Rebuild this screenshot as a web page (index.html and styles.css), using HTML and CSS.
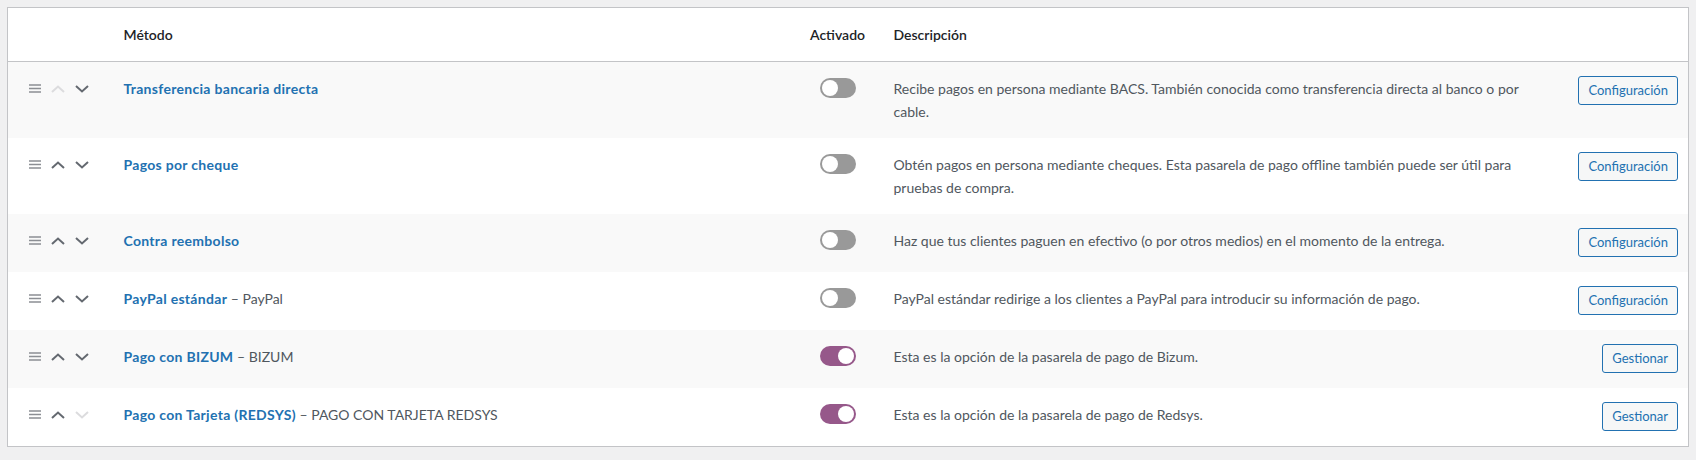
FILE: index.html
```html
<!DOCTYPE html>
<html lang="es">
<head>
  <meta charset="UTF-8">
  <title>Métodos de pago</title>
  <link rel="stylesheet" href="styles.css">
</head>
<body>
  <table class="gateways">
    <thead>
      <tr>
        <th class="sort"></th>
        <th class="name">Método</th>
        <th class="status">Activado</th>
        <th class="desc">Descripción</th>
        <th class="action"></th>
      </tr>
    </thead>
    <tbody>
      <tr>
        <td class="sort">
          <div class="sort-icons">
            <svg class="drag" width="12" height="9" viewBox="0 0 12 9"><path d="M0 1h12M0 4.5h12M0 8h12"/></svg>
            <svg class="arrow off" width="14" height="8" viewBox="0 0 14 8"><path d="M1 7L7 1.5 13 7"/></svg>
            <svg class="arrow" width="14" height="8" viewBox="0 0 14 8"><path d="M1 1l6 5.5L13 1"/></svg>
          </div>
        </td>
        <td class="name"><a href="#">Transferencia bancaria directa</a></td>
        <td class="status"><span class="toggle"></span></td>
        <td class="desc">Recibe pagos en persona mediante BACS. También conocida como transferencia directa al banco o por cable.</td>
        <td class="action"><a class="button" href="#">Configuración</a></td>
      </tr>
      <tr>
        <td class="sort">
          <div class="sort-icons">
            <svg class="drag" width="12" height="9" viewBox="0 0 12 9"><path d="M0 1h12M0 4.5h12M0 8h12"/></svg>
            <svg class="arrow" width="14" height="8" viewBox="0 0 14 8"><path d="M1 7L7 1.5 13 7"/></svg>
            <svg class="arrow" width="14" height="8" viewBox="0 0 14 8"><path d="M1 1l6 5.5L13 1"/></svg>
          </div>
        </td>
        <td class="name"><a href="#">Pagos por cheque</a></td>
        <td class="status"><span class="toggle"></span></td>
        <td class="desc">Obtén pagos en persona mediante cheques. Esta pasarela de pago offline también puede ser útil para pruebas de compra.</td>
        <td class="action"><a class="button" href="#">Configuración</a></td>
      </tr>
      <tr>
        <td class="sort">
          <div class="sort-icons">
            <svg class="drag" width="12" height="9" viewBox="0 0 12 9"><path d="M0 1h12M0 4.5h12M0 8h12"/></svg>
            <svg class="arrow" width="14" height="8" viewBox="0 0 14 8"><path d="M1 7L7 1.5 13 7"/></svg>
            <svg class="arrow" width="14" height="8" viewBox="0 0 14 8"><path d="M1 1l6 5.5L13 1"/></svg>
          </div>
        </td>
        <td class="name"><a href="#">Contra reembolso</a></td>
        <td class="status"><span class="toggle"></span></td>
        <td class="desc">Haz que tus clientes paguen en efectivo (o por otros medios) en el momento de la entrega.</td>
        <td class="action"><a class="button" href="#">Configuración</a></td>
      </tr>
      <tr>
        <td class="sort">
          <div class="sort-icons">
            <svg class="drag" width="12" height="9" viewBox="0 0 12 9"><path d="M0 1h12M0 4.5h12M0 8h12"/></svg>
            <svg class="arrow" width="14" height="8" viewBox="0 0 14 8"><path d="M1 7L7 1.5 13 7"/></svg>
            <svg class="arrow" width="14" height="8" viewBox="0 0 14 8"><path d="M1 1l6 5.5L13 1"/></svg>
          </div>
        </td>
        <td class="name"><a href="#">PayPal estándar</a> – PayPal</td>
        <td class="status"><span class="toggle"></span></td>
        <td class="desc">PayPal estándar redirige a los clientes a PayPal para introducir su información de pago.</td>
        <td class="action"><a class="button" href="#">Configuración</a></td>
      </tr>
      <tr>
        <td class="sort">
          <div class="sort-icons">
            <svg class="drag" width="12" height="9" viewBox="0 0 12 9"><path d="M0 1h12M0 4.5h12M0 8h12"/></svg>
            <svg class="arrow" width="14" height="8" viewBox="0 0 14 8"><path d="M1 7L7 1.5 13 7"/></svg>
            <svg class="arrow" width="14" height="8" viewBox="0 0 14 8"><path d="M1 1l6 5.5L13 1"/></svg>
          </div>
        </td>
        <td class="name"><a href="#">Pago con BIZUM</a> – BIZUM</td>
        <td class="status"><span class="toggle on"></span></td>
        <td class="desc">Esta es la opción de la pasarela de pago de Bizum.</td>
        <td class="action"><a class="button" href="#">Gestionar</a></td>
      </tr>
      <tr>
        <td class="sort">
          <div class="sort-icons">
            <svg class="drag" width="12" height="9" viewBox="0 0 12 9"><path d="M0 1h12M0 4.5h12M0 8h12"/></svg>
            <svg class="arrow" width="14" height="8" viewBox="0 0 14 8"><path d="M1 7L7 1.5 13 7"/></svg>
            <svg class="arrow off" width="14" height="8" viewBox="0 0 14 8"><path d="M1 1l6 5.5L13 1"/></svg>
          </div>
        </td>
        <td class="name"><a href="#">Pago con Tarjeta (REDSYS)</a> – PAGO CON TARJETA REDSYS</td>
        <td class="status"><span class="toggle on"></span></td>
        <td class="desc">Esta es la opción de la pasarela de pago de Redsys.</td>
        <td class="action"><a class="button" href="#">Gestionar</a></td>
      </tr>
    </tbody>
  </table>
</body>
</html>
```
FILE: styles.css
```css
:root {
  --page-bg: #f0f0f1;
  --border: #c3c4c7;
  --link: #2271b1;
  --text: #50575e;
  --head: #1d2327;
  --woo: #96588a;
}
* {
  box-sizing: border-box;
}
body {
  margin: 7px;
  background-color: var(--page-bg);
  font-family: "Lato", "Noto Sans", sans-serif;
  font-size: 14px;
  line-height: 23px;
  color: var(--text);
}
.gateways {
  width: 100%;
  table-layout: fixed;
  border-collapse: collapse;
  background-color: #fff;
  border: 1px solid var(--border);
}
.gateways th,
.gateways td {
  padding: 15px 10px;
  text-align: left;
  vertical-align: top;
}
.gateways th {
  color: var(--head);
  font-weight: 600;
  border-bottom: 1px solid var(--border);
}
.gateways tbody tr:nth-child(odd) {
  background-color: #f9f9f9;
}
.sort {
  width: 106px;
  padding-left: 21px !important;
}
.sort-icons {
  display: flex;
  align-items: center;
  height: 23px;
  gap: 10px;
}
.sort-icons svg {
  fill: none;
  stroke-width: 2;
}
.drag {
  stroke: #8c8f94;
  stroke-width: 1.6 !important;
}
.arrow {
  stroke: #646970;
}
.arrow.off {
  stroke: #dcdcde;
}
.name {
  width: auto;
}
.name a {
  color: var(--link);
  font-weight: 700;
  letter-spacing: 0.3px;
  text-decoration: none;
}
.status {
  width: 76px;
  text-align: center !important;
}
.toggle {
  display: block;
  width: 36px;
  height: 20px;
  margin: 1px auto 0;
  border-radius: 10px;
  background-color: #999;
  position: relative;
}
.toggle::after {
  content: "";
  position: absolute;
  top: 2px;
  left: 2px;
  width: 16px;
  height: 16px;
  border-radius: 50%;
  background-color: #fff;
}
.toggle.on {
  background-color: var(--woo);
}
.toggle.on::after {
  left: 18px;
}
.desc {
  width: 678px;
  padding-left: 18px !important;
}
.action {
  width: 135px;
  text-align: right !important;
  padding-top: 14px !important;
}
.button {
  display: inline-block;
  height: 29px;
  padding: 0 9px;
  line-height: 27px;
  font-size: 13px;
  color: var(--link);
  background-color: #f6f7f7;
  border: 1px solid var(--link);
  border-radius: 3px;
  text-decoration: none;
}
```
